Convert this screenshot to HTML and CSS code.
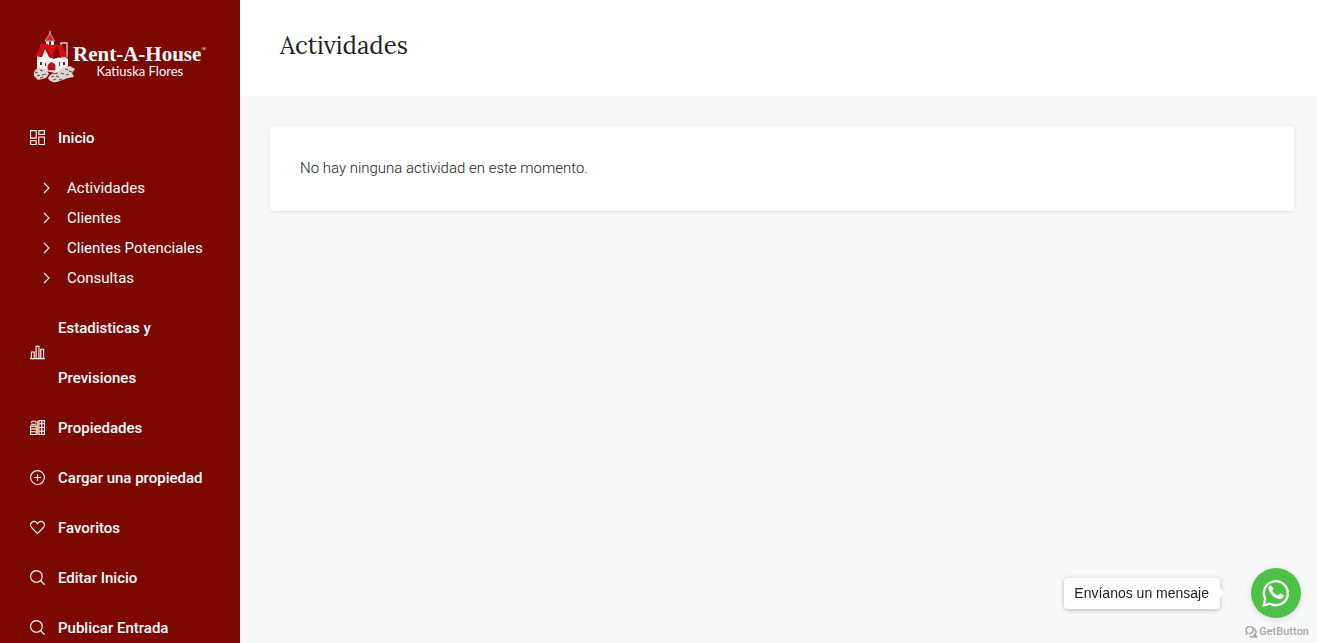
FILE: index.html
```html
<!DOCTYPE html>
<html lang="es">
<head>
  <meta charset="UTF-8" />
  <meta name="viewport" content="width=device-width, initial-scale=1.0"/>
  <title>Actividades</title>
  <link rel="stylesheet" href="styles.css">
</head>
<body>

<div class="layout">
  <aside class="sidebar">
    <a class="logo" href="#">
      <svg class="logo-house" viewBox="0 0 42 52" aria-hidden="true">
        <!-- walls -->
        <path d="M4 25L13 15 20 28 31 25 35 28V40L22 42 4 38Z" fill="#f6f2f1"/>
        <path d="M7 31h2v3H7zM12 32h1v3h-1zM26 31h1v4h-1zM30 31h2v3h-2z" fill="#4a3532"/>
        <path d="M15 39V34Q18.500 29 22 34V39Z" fill="#d20a11" stroke="#6b3532" stroke-width=".7"/>
        <!-- tower -->
        <path d="M13 9H21V15H13Z" fill="#eee"/>
        <path d="M16 10h2v4h-2z" fill="#4a3532"/>
        <path d="M12 10L17 2 21.500 10Z" fill="#cf2a2c" stroke="#c9a5a1" stroke-width=".9"/>
        <path d="M17 0v3" stroke="#e6d8d6" stroke-width="1"/>
        <path d="M28 15V12H34V26" fill="none" stroke="#ddd0ce" stroke-width="1.300"/>
        <!-- roofs -->
        <path d="M3 25L8 13H15L21 27 16 26 12 18 9 26Z" fill="#dc0c14"/>
        <path d="M3 25L8 13H13L8 26Z" fill="#dc0c14"/>
        <path d="M14 14H29L34 25 27 27 24 17 19 27Z" fill="#dc0c14"/>
        <path d="M8 26L12 16 18 27 24 15 27 27" fill="none" stroke="#5a0f0c" stroke-width=".8"/>
        <!-- stones -->
        <path d="M1 45Q0 38 6 37L13 38 16 43 13 47 5 49Z" fill="#ddd3d0"/>
        <path d="M15 47Q18 41 24 43L27 38 37 35 42 38 39 42 41 46 35 47 24 51Q17 52 15 47Z" fill="#ddd3d0"/>
        <path d="M2 41l3 1M7 39l3 1M4 45l3-1M9 44l4-1M7 47l3-1M18 46l3-1M23 45l3 1M20 49l3-1M26 49l3-1M28 42l3 1M32 38l3 1M36 40l3 1M33 44l3-1" fill="none" stroke="#6b4d49" stroke-width="1"/>
      </svg>
      <span class="logo-text">
        <span class="logo-name">Rent-A-House<small>®</small></span>
        <span class="logo-agent">Katiuska Flores</span>
      </span>
    </a>

    <nav class="menu">
      <a class="menu-item" href="#">
        <svg class="icon" viewBox="0 0 16 16"><path d="M.6.6h6v8h-6zM9.400.6h6v4h-6zM.6 11.400h6v4h-6zM9.400 7.400h6v8h-6z"/></svg>
        <span>Inicio</span>
      </a>
      <div class="submenu">
        <a href="#"><svg class="chevron" viewBox="0 0 8 12"><path d="M1 1l5 5-5 5"/></svg>Actividades</a>
        <a href="#"><svg class="chevron" viewBox="0 0 8 12"><path d="M1 1l5 5-5 5"/></svg>Clientes</a>
        <a href="#"><svg class="chevron" viewBox="0 0 8 12"><path d="M1 1l5 5-5 5"/></svg>Clientes Potenciales</a>
        <a href="#"><svg class="chevron" viewBox="0 0 8 12"><path d="M1 1l5 5-5 5"/></svg>Consultas</a>
      </div>
      <a class="menu-item" href="#">
        <svg class="icon" viewBox="0 0 16 16"><path d="M0 14.500h16M1.500 14V7.500h3V14M6.500 14V1.500h3V14M11.500 14V4.500h3V14"/></svg>
        <span>Estadisticas y Previsiones</span>
      </a>
      <a class="menu-item" href="#">
        <svg class="icon" viewBox="0 0 16 16">
          <path d="M.6 6.500h6v9h-6zM9.500.6h6v15h-6zM1 4.500h5.500M1.500 3c0-2 4-3 5 0"/>
          <path d="M1 9.500h5M1 12.500h5M10 4h5M10 8h5M10 12h5M12.500 1v14"/>
          <path class="icon-accent" d="M8 1v14.500"/>
        </svg>
        <span>Propiedades</span>
      </a>
      <a class="menu-item" href="#">
        <svg class="icon" viewBox="0 0 16 16"><circle cx="8" cy="8" r="7.400"/><path d="M8 4.500v7M4.500 8h7"/></svg>
        <span>Cargar una propiedad</span>
      </a>
      <a class="menu-item" href="#">
        <svg class="icon" viewBox="0 0 16 16"><path d="M8 14.500L1.700 8C.2 6.400.2 4 1.700 2.600 3.300 1 5.700 1.200 7 2.700L8 4l1-1.300c1.300-1.500 3.700-1.700 5.300-.1 1.500 1.400 1.500 3.800 0 5.400z"/></svg>
        <span>Favoritos</span>
      </a>
      <a class="menu-item" href="#">
        <svg class="icon" viewBox="0 0 16 16"><circle cx="6.800" cy="6.800" r="6.200"/><path d="M11.200 11.200l4.500 4.500"/></svg>
        <span>Editar Inicio</span>
      </a>
      <a class="menu-item" href="#">
        <svg class="icon" viewBox="0 0 16 16"><circle cx="6.800" cy="6.800" r="6.200"/><path d="M11.200 11.200l4.500 4.500"/></svg>
        <span>Publicar Entrada</span>
      </a>
    </nav>
  </aside>

  <main class="content">
    <header class="page-header">
      <h1>Actividades</h1>
    </header>
    <section class="card">
      <p>No hay ninguna actividad en este momento.</p>
    </section>
  </main>
</div>

<!-- WhatsApp chat widget -->
<div class="chat">
  <div class="chat-row">
    <div class="chat-message">Envíanos un mensaje</div>
    <button class="chat-button" type="button" aria-label="WhatsApp">
      <svg viewBox="0 0 28 28">
        <path d="M1.500 26.500L3.300 20A12 12 0 1 1 8 24.700Z" fill="none" stroke="#fff" stroke-width="2.300" stroke-linejoin="round"/>
        <path d="M9.800 7.300c-.4-.8-.8-.8-1.200-.8-1 0-2.100 1.200-2.100 3.100 0 1.800 1.300 3.600 1.500 3.800.2.300 2.600 4.100 6.400 5.600 3.200 1.300 3.800 1 4.500.9.700 0 2.300-.9 2.600-1.800.3-.9.300-1.700.2-1.800-.1-.3-.4-.4-.7-.5l-2.500-1.200c-.4-.1-.6-.2-.9.200l-1.200 1.500c-.3.300-.5.300-.9.100-.4-.2-1.600-.6-3-1.900-1.100-1-1.900-2.200-2.100-2.600-.2-.4 0-.6.200-.8l.8-1c.2-.3.200-.6.100-.9z" fill="#fff"/>
      </svg>
    </button>
  </div>
  <a class="chat-brand" href="#">
    <svg viewBox="0 0 14 12"><path d="M2 9l1-2.500A3.600 3.600 0 1 1 6.500 7.500H4.500M6 10.500Q9.500 11.500 11 8.500L12.500 11H9.500M9 2A4 4 0 0 1 11 8.500"/></svg>
    GetButton
  </a>
</div>

</body>
</html>
```

FILE: styles.css
```css
:root {
  --sidebar-bg: #7d0800;
  --page-bg: #f7f8fa;
  --text-color: #222;
  --green: #4dc247;
}

* {
  box-sizing: border-box;
}

body {
  margin: 0;
  font-family: Roboto, 'Liberation Sans', sans-serif;
  font-size: 15px;
  color: var(--text-color);
  background: var(--page-bg);
}

a {
  color: inherit;
  text-decoration: none;
}

.layout {
  display: flex;
  height: 100vh;
}

.sidebar {
  flex: 0 0 240px;
  padding: 30px 30px 0;
  overflow-y: auto;
  scrollbar-width: none;
  background: var(--sidebar-bg);
  color: #fff;
}

.logo {
  display: flex;
  align-items: center;
  height: 53px;
  margin: 0 0 30px 3px;
}

.logo-house {
  flex: none;
  width: 42px;
  height: 52px;
}

.logo-text {
  display: flex;
  flex-direction: column;
  align-items: center;
  margin-left: -2px;
  padding-top: 10px;
  white-space: nowrap;
}

.logo-name {
  display: flex;
  font-family: 'Liberation Serif', serif;
  font-size: 21px;
  font-weight: bold;
  line-height: 18px;
}

.logo-name small {
  font-size: 7px;
  line-height: 8px;
  font-weight: normal;
}

.logo-agent {
  font-family: Lato, sans-serif;
  font-size: 13px;
  line-height: 16px;
}

.menu-item {
  display: flex;
  align-items: center;
  gap: 13px;
  font-weight: 500;
  line-height: 50px;
}

.icon {
  flex: none;
  width: 15px;
  height: 16px;
  padding-bottom: 1px;
  fill: none;
  stroke: #fff;
  stroke-width: 1.2;
}

.icon-accent {
  stroke: #f5c27a;
  stroke-width: 2;
}

.submenu {
  padding: 10px 0 10px 13px;
}

.submenu a {
  display: flex;
  align-items: center;
  gap: 16px;
  line-height: 30px;
}

.chevron {
  width: 8px;
  height: 12px;
  fill: none;
  stroke: #fff;
  stroke-width: 1.1;
}

.content {
  flex: 1;
  min-width: 0;
  overflow-y: auto;
}

.page-header {
  padding: 30px 40px 34px;
  background: #fff;
}

.page-header h1 {
  margin: 0;
  font-family: Lora, 'Noto Serif', 'Liberation Serif', serif;
  font-size: 24px;
  font-weight: normal;
  line-height: 32px;
}

.card {
  margin: 30px 23px 30px 30px;
  padding: 30px;
  border-radius: 4px;
  background: #fff;
  box-shadow: 0 1px 4px rgba(0, 0, 0, 0.09);
}

.card p {
  margin: 0;
  font-weight: 300;
  line-height: 25px;
}

.chat {
  position: fixed;
  right: 8px;
  bottom: 4px;
  display: flex;
  flex-direction: column;
  align-items: flex-end;
  gap: 7px;
}

.chat-row {
  display: flex;
  align-items: center;
  gap: 31px;
  margin-right: 8px;
}

.chat-message {
  position: relative;
  padding: 0 11px 0 10px;
  border-radius: 4px;
  background: #fff;
  box-shadow: 0 1px 5px rgba(0, 0, 0, 0.25);
  font-family: 'Liberation Sans', Arial, sans-serif;
  font-size: 14px;
  line-height: 31px;
}

.chat-message::after {
  content: '';
  position: absolute;
  top: 10px;
  right: -5px;
  border: 5px solid transparent;
  border-left-color: #fff;
  border-right: 0;
}

.chat-button {
  display: flex;
  align-items: center;
  justify-content: center;
  width: 50px;
  height: 50px;
  padding: 0;
  border: none;
  border-radius: 50%;
  background: var(--green);
  box-shadow: 0 2px 6px rgba(0, 0, 0, 0.12);
  cursor: pointer;
}

.chat-button svg {
  width: 28px;
  height: 28px;
}

.chat-brand {
  display: flex;
  align-items: center;
  gap: 1px;
  font-family: Roboto, sans-serif;
  font-size: 11px;
  font-weight: 600;
  line-height: 14px;
  color: #a9aaab;
}

.chat-brand svg {
  width: 14px;
  height: 12px;
  fill: none;
  stroke: #a9aaab;
  stroke-width: 1.6;
}
```
